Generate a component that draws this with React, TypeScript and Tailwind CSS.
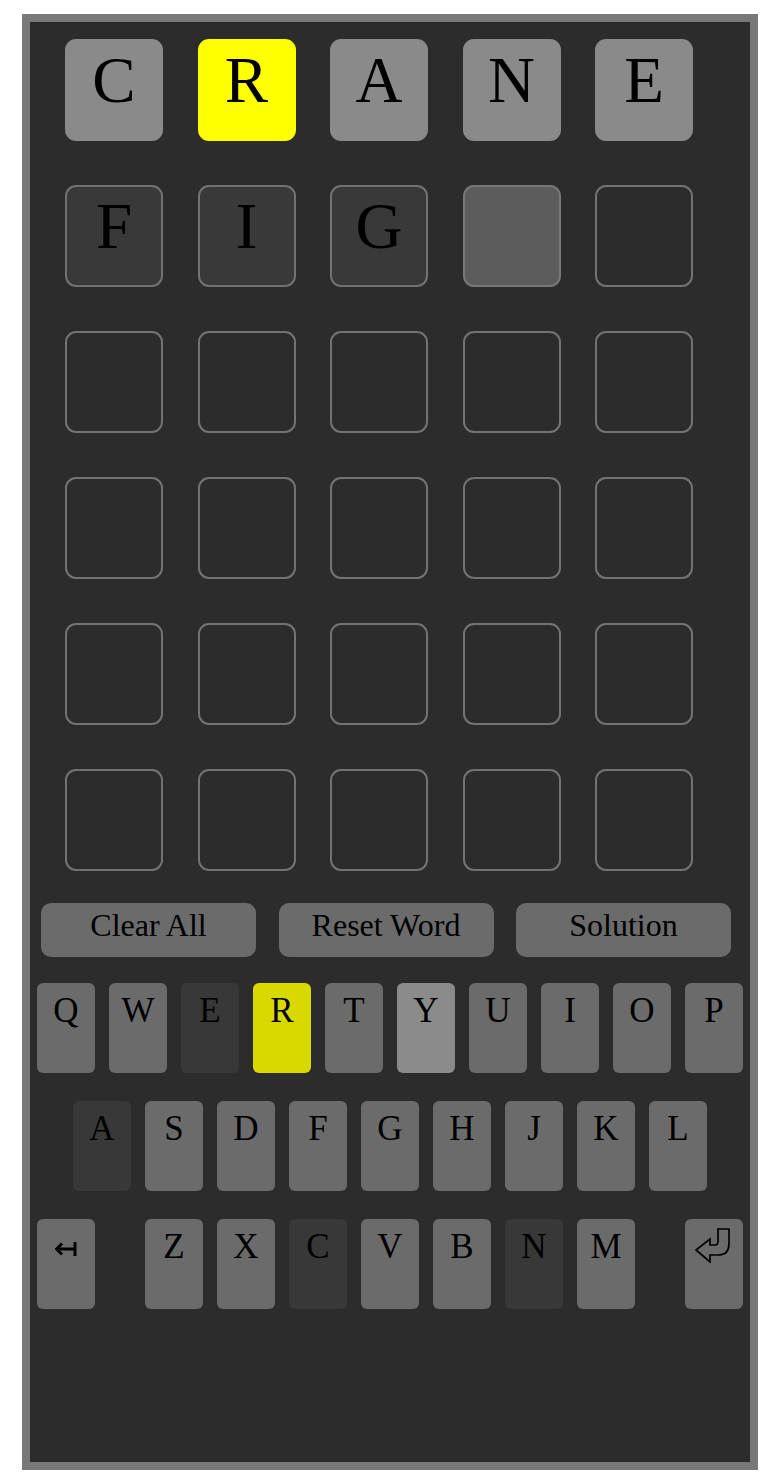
import React from 'react';

type TileState = 'absent' | 'present' | 'typed' | 'cursor' | 'empty';

const rows: { letter: string; state: TileState }[][] = [
  [
    { letter: 'C', state: 'absent' },
    { letter: 'R', state: 'present' },
    { letter: 'A', state: 'absent' },
    { letter: 'N', state: 'absent' },
    { letter: 'E', state: 'absent' },
  ],
  [
    { letter: 'F', state: 'typed' },
    { letter: 'I', state: 'typed' },
    { letter: 'G', state: 'typed' },
    { letter: '', state: 'cursor' },
    { letter: '', state: 'empty' },
  ],
  ...Array.from({ length: 4 }, () =>
    Array.from({ length: 5 }, () => ({ letter: '', state: 'empty' as TileState }))
  ),
];

const tileClass: Record<TileState, string> = {
  absent: 'bg-[#8a8a8a] border-[#8a8a8a]',
  present: 'bg-[#ffff00] border-[#ffff00]',
  typed: 'bg-[#393939] border-[#727272]',
  cursor: 'bg-[#5c5c5c] border-[#787878]',
  empty: 'bg-transparent border-[#737373]',
};

type KeyState = 'default' | 'used' | 'present' | 'hint';

const keyClass: Record<KeyState, string> = {
  default: 'bg-[#6b6b6b]',
  used: 'bg-[#383838]',
  present: 'bg-[#d9d900]',
  hint: 'bg-[#8b8b8b]',
};

const keyStates: Record<string, KeyState> = {
  E: 'used',
  R: 'present',
  Y: 'hint',
  A: 'used',
  C: 'used',
  N: 'used',
};

const Key = ({ label, children }: { label?: string; children?: React.ReactNode }) => (
  <div
    className={`w-[58px] h-[90px] rounded-[6px] flex justify-center pt-[10px] text-[35px] leading-none text-black ${
      keyClass[(label && keyStates[label]) || 'default']
    }`}
  >
    {children ?? label}
  </div>
);

const BackIcon = () => (
  <svg width="22" height="14" viewBox="0 0 22 14" className="mt-[13px]">
    <path d="M2 7 H19" stroke="black" strokeWidth="3" />
    <path d="M7 1.5 L1.5 7 L7 12.5" stroke="black" strokeWidth="3" fill="none" />
    <path d="M20 0 V14" stroke="black" strokeWidth="3" />
  </svg>
);

const EnterIcon = () => (
  <svg width="35" height="35" viewBox="-1 -1 35 35" className="-mt-[1px] mr-[3px]">
    <path
      d="M22 0 H33 V15 Q33 26 22 26 H14 V33 L0 21 L14 10 V16 H19 Q22 16 22 12 Z"
      stroke="black"
      strokeWidth="1.7"
      fill="none"
    />
  </svg>
);

export default function App() {
  const row1 = 'QWERTYUIOP'.split('');
  const row2 = 'ASDFGHJKL'.split('');
  const row3 = 'ZXCVBNM'.split('');

  return (
    <div className="pl-[22px] pt-[14px] bg-white" style={{ fontFamily: '"Liberation Serif", "Times New Roman", serif' }}>
      <div className="w-[736px] h-[1456px] border-8 border-[#787878] bg-[#2c2c2c]">
        {/* Board */}
        <div className="pt-[17px] pl-[35px] flex flex-col gap-[44px]">
          {rows.map((row, r) => (
            <div key={r} className="flex gap-[34.5px]">
              {row.map((t, c) => (
                <div
                  key={c}
                  className={`w-[98px] h-[102px] rounded-[11px] border-2 flex justify-center pt-[2px] text-[65px] leading-[75px] text-black ${tileClass[t.state]}`}
                >
                  {t.letter}
                </div>
              ))}
            </div>
          ))}
        </div>

        {/* Actions */}
        <div className="mt-[32px] pl-[11px] flex gap-[22.5px]">
          {['Clear All', 'Reset Word', 'Solution'].map((b) => (
            <div
              key={b}
              className="w-[215px] h-[54px] rounded-[10px] bg-[#6b6b6b] flex justify-center pt-[6px] text-[32px] leading-none text-black"
            >
              {b}
            </div>
          ))}
        </div>

        {/* Keyboard */}
        <div className="mt-[26px] px-[7px] flex flex-col gap-[28px]">
          <div className="flex justify-center gap-[14px]">
            {row1.map((k) => (
              <Key key={k} label={k} />
            ))}
          </div>
          <div className="flex justify-center gap-[14px]">
            {row2.map((k) => (
              <Key key={k} label={k} />
            ))}
          </div>
          <div className="flex justify-between">
            <Key>
              <BackIcon />
            </Key>
            <div className="flex gap-[14px]">
              {row3.map((k) => (
                <Key key={k} label={k} />
              ))}
            </div>
            <Key>
              <EnterIcon />
            </Key>
          </div>
        </div>
      </div>
    </div>
  );
}
